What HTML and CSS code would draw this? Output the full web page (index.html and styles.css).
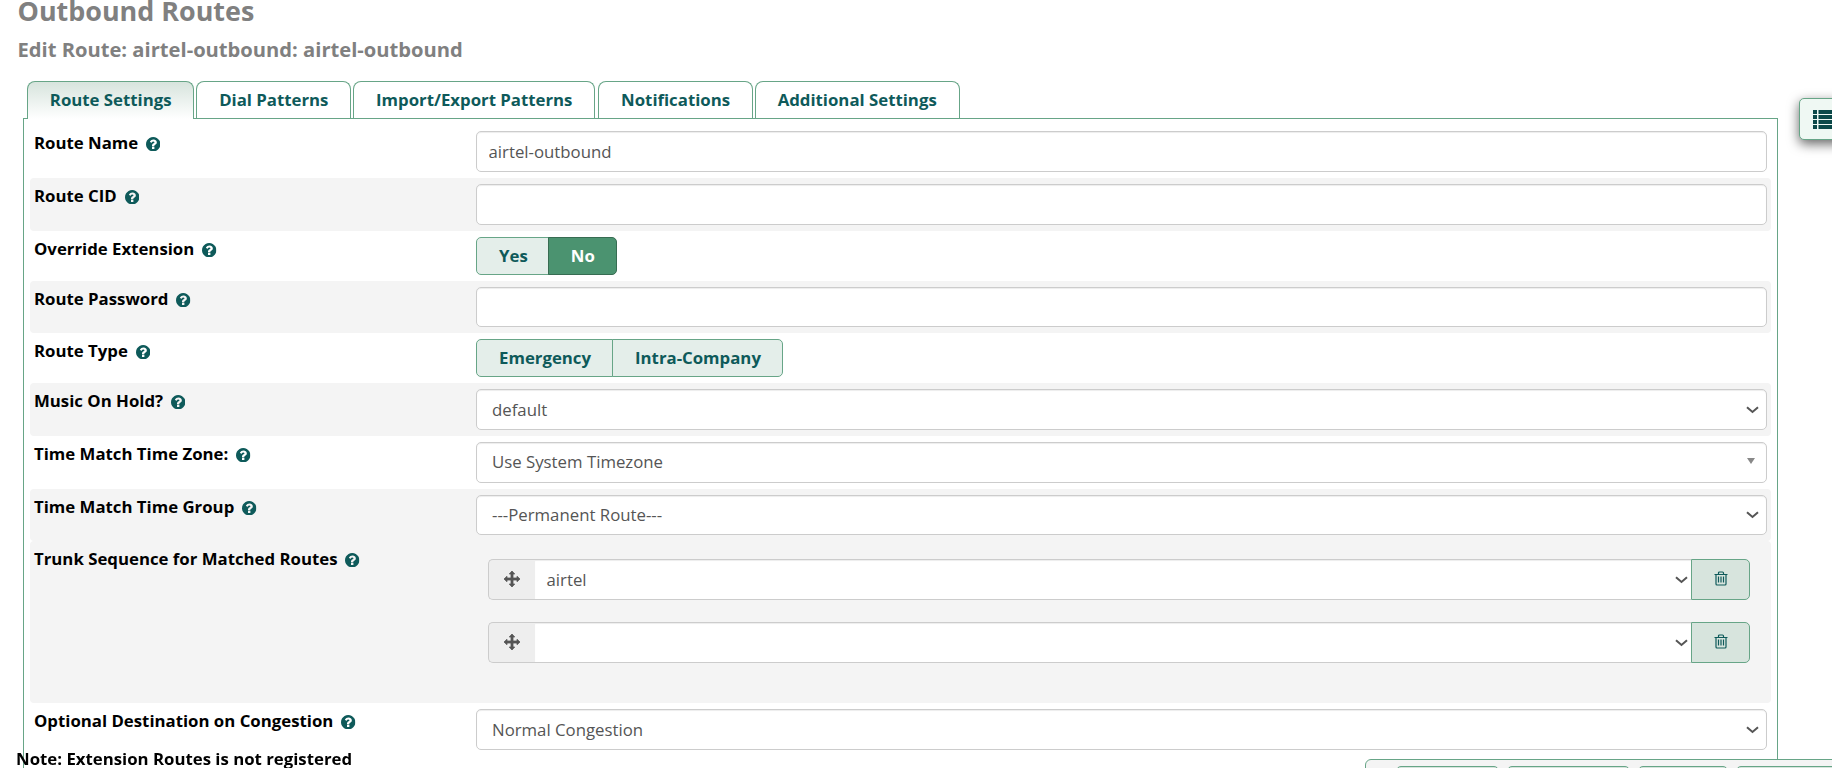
FILE: index.html
```
<!DOCTYPE html>
<html lang="en">
<head>
    <meta charset="UTF-8">
    <meta name="viewport" content="width=device-width, initial-scale=1.0">
    <title>Outbound Routes</title>
    <link rel="stylesheet" href="styles.css">
</head>
<body>
    <!-- shared icons -->
    <svg class="sprite" aria-hidden="true">
        <symbol id="help" viewBox="0 0 1536 1536">
            <path d="M896 1248v-192q0-14-9-23t-23-9H672q-14 0-23 9t-9 23v192q0 14 9 23t23 9h192q14 0 23-9t9-23zm256-672q0-88-55.500-163T958 297t-170-41q-243 0-371 213-15 24 8 42l132 100q7 6 19 6 16 0 25-12 53-68 86-92 34-24 86-24 48 0 85.500 26t37.500 59q0 38-20 61t-68 45q-63 28-115.500 86.500T640 892v36q0 14 9 23t23 9h192q14 0 23-9t9-23q0-19 21.500-49.500T972 829q32-18 49-28.500t46-35 44.500-48 28-60.500 12.500-81zm384 192q0 209-103 385.500T1153.500 1433 768 1536t-385.500-103T103 1153.500 0 768t103-385.500T382.500 103 768 0t385.500 103T1433 382.500 1536 768z"/>
        </symbol>
        <symbol id="move" viewBox="0 0 18 18">
            <path d="M9 1l2.700 3H10v4h4V6.300L17 9l-3 2.700V10h-4v4h1.700L9 17l-2.700-3H8v-4H4v1.700L1 9l3-2.700V8h4V4H6.300z" stroke-width=".8" stroke="currentColor" stroke-linejoin="round"/>
        </symbol>
        <symbol id="trash" viewBox="0 0 14 15">
            <path d="M.5 3.500h13M4.500 3.200V2q0-1 1-1h3q1 0 1 1v1.200M2 3.500V13q0 1 1 1h8q1 0 1-1V3.500M4.500 5.500v6M7 5.500v6M9.500 5.500v6" fill="none" stroke="currentColor" stroke-width="1.200"/>
        </symbol>
        <symbol id="chevron" viewBox="0 0 13 8">
            <path d="M1 1.200L6.500 6 12 1.200" fill="none" stroke="currentColor" stroke-width="2"/>
        </symbol>
    </svg>

    <header>
        <h1>Outbound Routes</h1>
        <h2>Edit Route: airtel-outbound: airtel-outbound</h2>
    </header>

    <nav class="tabs">
        <a class="tab active" href="#">Route Settings</a>
        <a class="tab" href="#">Dial Patterns</a>
        <a class="tab wide" href="#">Import/Export Patterns</a>
        <a class="tab" href="#">Notifications</a>
        <a class="tab" href="#">Additional Settings</a>
    </nav>

    <form class="panel">
        <div class="row">
            <label>Route Name <svg class="help"><use href="#help"/></svg></label>
            <div class="field"><input class="control" type="text" value="airtel-outbound"></div>
        </div>
        <div class="row shaded">
            <label>Route CID <svg class="help"><use href="#help"/></svg></label>
            <div class="field"><input class="control" type="text"></div>
        </div>
        <div class="row toggle-row">
            <label>Override Extension <svg class="help"><use href="#help"/></svg></label>
            <div class="field toggle">
                <button type="button">Yes</button>
                <button type="button" class="on">No</button>
            </div>
        </div>
        <div class="row shaded short">
            <label>Route Password <svg class="help"><use href="#help"/></svg></label>
            <div class="field"><input class="control" type="text"></div>
        </div>
        <div class="row toggle-row">
            <label>Route Type <svg class="help"><use href="#help"/></svg></label>
            <div class="field toggle">
                <button type="button">Emergency</button>
                <button type="button">Intra-Company</button>
            </div>
        </div>
        <div class="row shaded">
            <label>Music On Hold? <svg class="help"><use href="#help"/></svg></label>
            <div class="field">
                <div class="control select">default <svg class="chevron"><use href="#chevron"/></svg></div>
            </div>
        </div>
        <div class="row">
            <label>Time Match Time Zone: <svg class="help"><use href="#help"/></svg></label>
            <div class="field">
                <div class="control select timezone">Use System Timezone <span class="caret"></span></div>
            </div>
        </div>
        <div class="row shaded short">
            <label>Time Match Time Group <svg class="help"><use href="#help"/></svg></label>
            <div class="field">
                <div class="control select">---Permanent Route--- <svg class="chevron"><use href="#chevron"/></svg></div>
            </div>
        </div>
        <div class="row shaded trunks">
            <label>Trunk Sequence for Matched Routes <svg class="help"><use href="#help"/></svg></label>
            <div class="field trunk-list">
                <div class="trunk">
                    <span class="handle"><svg class="move"><use href="#move"/></svg></span>
                    <div class="control select">airtel <svg class="chevron"><use href="#chevron"/></svg></div>
                    <button type="button" class="delete"><svg class="trash"><use href="#trash"/></svg></button>
                </div>
                <div class="trunk">
                    <span class="handle"><svg class="move"><use href="#move"/></svg></span>
                    <div class="control select"><span></span><svg class="chevron"><use href="#chevron"/></svg></div>
                    <button type="button" class="delete"><svg class="trash"><use href="#trash"/></svg></button>
                </div>
            </div>
        </div>
        <div class="row">
            <label>Optional Destination on Congestion <svg class="help"><use href="#help"/></svg></label>
            <div class="field">
                <div class="control select">Normal Congestion <svg class="chevron"><use href="#chevron"/></svg></div>
            </div>
        </div>
    </form>

    <p class="note">Note: Extension Routes is not registered</p>

    <button type="button" class="side-menu">
        <svg class="list" viewBox="0 0 24 19">
            <path d="M0 0h4v4H0zM5.500 0H24v4H5.500zM0 5h4v4H0zM5.500 5H24v4H5.500zM0 10h4v4H0zM5.500 10H24v4H5.500zM0 15h4v4H0zM5.500 15H24v4H5.500z"/>
        </svg>
    </button>

    <div class="action-bar">
        <button type="button"></button>
        <button type="button" class="wide"></button>
        <button type="button" class="narrow"></button>
        <button type="button"></button>
    </div>
</body>
</html>
```
FILE: styles.css
```
* {
    box-sizing: border-box;
}
body {
    margin: 0;
    height: 768px;
    overflow: hidden;
    background-color: white;
    color: black;
    font-family: "Open Sans", sans-serif;
    font-size: 16.8px;
    line-height: 24px;
}
button, input {
    font-family: inherit;
    font-size: inherit;
}
.sprite {
    display: none;
}
header {
    height: 81px;
    padding-left: 17.5px;
    color: #808080;
}
h1 {
    margin: 0;
    padding-bottom: 14px;
    font-size: 26.9px;
    line-height: 21px;
}
h2 {
    margin: 0;
    font-size: 20.16px;
    line-height: 28px;
}

/* tabs */
.tabs {
    display: flex;
    gap: 2px;
    height: 38px;
    padding-left: 27px;
}
.tab {
    height: 37px;
    padding: 6px 21.8px;
    border: 1px solid #67a587;
    border-bottom: none;
    border-radius: 8px 8px 0 0;
    color: #0e5a5a;
    font-weight: bold;
    text-decoration: none;
}
.tab.active {
    height: 38px;
    background: linear-gradient(#d7e4dd, white);
    z-index: 1;
}
.tab.wide {
    margin-right: 1px;
}
.panel {
    width: 1755px;
    height: 660px;
    margin: -1px 0 0 23px;
    padding: 6px 6px 0;
    border: 1px solid #67a587;
}

/* form rows */
.row {
    display: flex;
    height: 53px;
    padding: 6px 4px 6px 4px;
    border-radius: 4px;
}
.row.short {
    height: 52px;
}
.row.toggle-row {
    height: 50px;
}
.row.trunks {
    height: 162px;
}
.shaded {
    background-color: #f4f4f4;
}
label {
    width: 442px;
    font-weight: bold;
}
.help {
    width: 14.4px;
    height: 14.4px;
    margin-left: 3.5px;
    vertical-align: -2px;
    fill: #0e5a5a;
}
.field {
    display: flex;
    flex: 1;
}
.control {
    width: 100%;
    height: 100%;
    padding: 0 11.5px;
    border: 1px solid #ccc;
    border-radius: 5px;
    background-color: white;
    box-shadow: inset 0 1px 1px rgba(0, 0, 0, 0.075);
    color: #555;
}
.select {
    display: flex;
    align-items: center;
    justify-content: space-between;
    padding: 0 7px 0 15px;
}
.select.timezone {
    padding-bottom: 2px;
}
.chevron {
    width: 13px;
    height: 8px;
}
.caret {
    margin: 0 4px 2px 0;
    border: 4px solid transparent;
    border-top: 6px solid #888;
    border-bottom: none;
}
.toggle button {
    padding: 0 21px 2px 22px;
    border: 1px solid #67a587;
    border-radius: 5px 0 0 5px;
    background-color: #e4eeea;
    color: #0e5a5a;
    font-weight: bold;
}
.toggle button + button {
    margin-left: -1px;
    border-radius: 0 5px 5px 0;
}
.toggle button.on {
    margin-left: -2px;
    border-color: #376c52;
    background-color: #4b9370;
    color: white;
}

/* trunk sequence */
.trunk-list {
    flex-direction: column;
    gap: 22px;
    padding: 12px 17px 0 12px;
}
.trunk {
    display: flex;
    height: 41px;
}
.handle {
    display: flex;
    align-items: center;
    justify-content: center;
    width: 47px;
    padding-bottom: 2px;
    border: 1px solid #ccc;
    border-right: none;
    border-radius: 5px 0 0 5px;
    background-color: #eee;
    color: #555;
}
.move {
    width: 18px;
    height: 18px;
    fill: currentColor;
}
.trunk .control {
    flex: 1;
    padding: 0 3.5px 0 11.5px;
    border-width: 1px 0;
    border-radius: 0;
}
.delete {
    width: 59px;
    padding: 0 0 2px;
    border: 1px solid #67a587;
    border-radius: 0 5px 5px 0;
    background-color: #d7e4dd;
    color: #0e5a5a;
}
.trash {
    display: block;
    width: 14px;
    height: 15px;
    margin: 0 auto;
}

/* fixed page parts */
.note {
    position: fixed;
    left: 16px;
    top: 747px;
    margin: 0;
    font-weight: bold;
}
.side-menu {
    position: fixed;
    left: 1799px;
    top: 98px;
    width: 60px;
    height: 42px;
    padding: 0 0 0 13px;
    border: 1px solid #67a587;
    border-radius: 5px;
    background-color: #eff8f3;
    box-shadow: 0 4px 12px rgba(0, 0, 0, 0.6);
}
.list {
    display: block;
    width: 24px;
    height: 19px;
    fill: #0b4848;
}
.action-bar {
    position: fixed;
    left: 1365px;
    top: 759px;
    display: flex;
    gap: 8px;
    width: 500px;
    height: 50px;
    padding: 6px 30px;
    border: 1px solid #67a587;
    border-radius: 6px;
    background-color: #f4f4f4;
}
.action-bar button {
    flex: none;
    width: 103px;
    border: 1px solid #67a587;
    border-radius: 5px;
    background-color: #d7e4dd;
}
.action-bar .wide {
    width: 123px;
}
.action-bar .narrow {
    width: 90px;
}
```
